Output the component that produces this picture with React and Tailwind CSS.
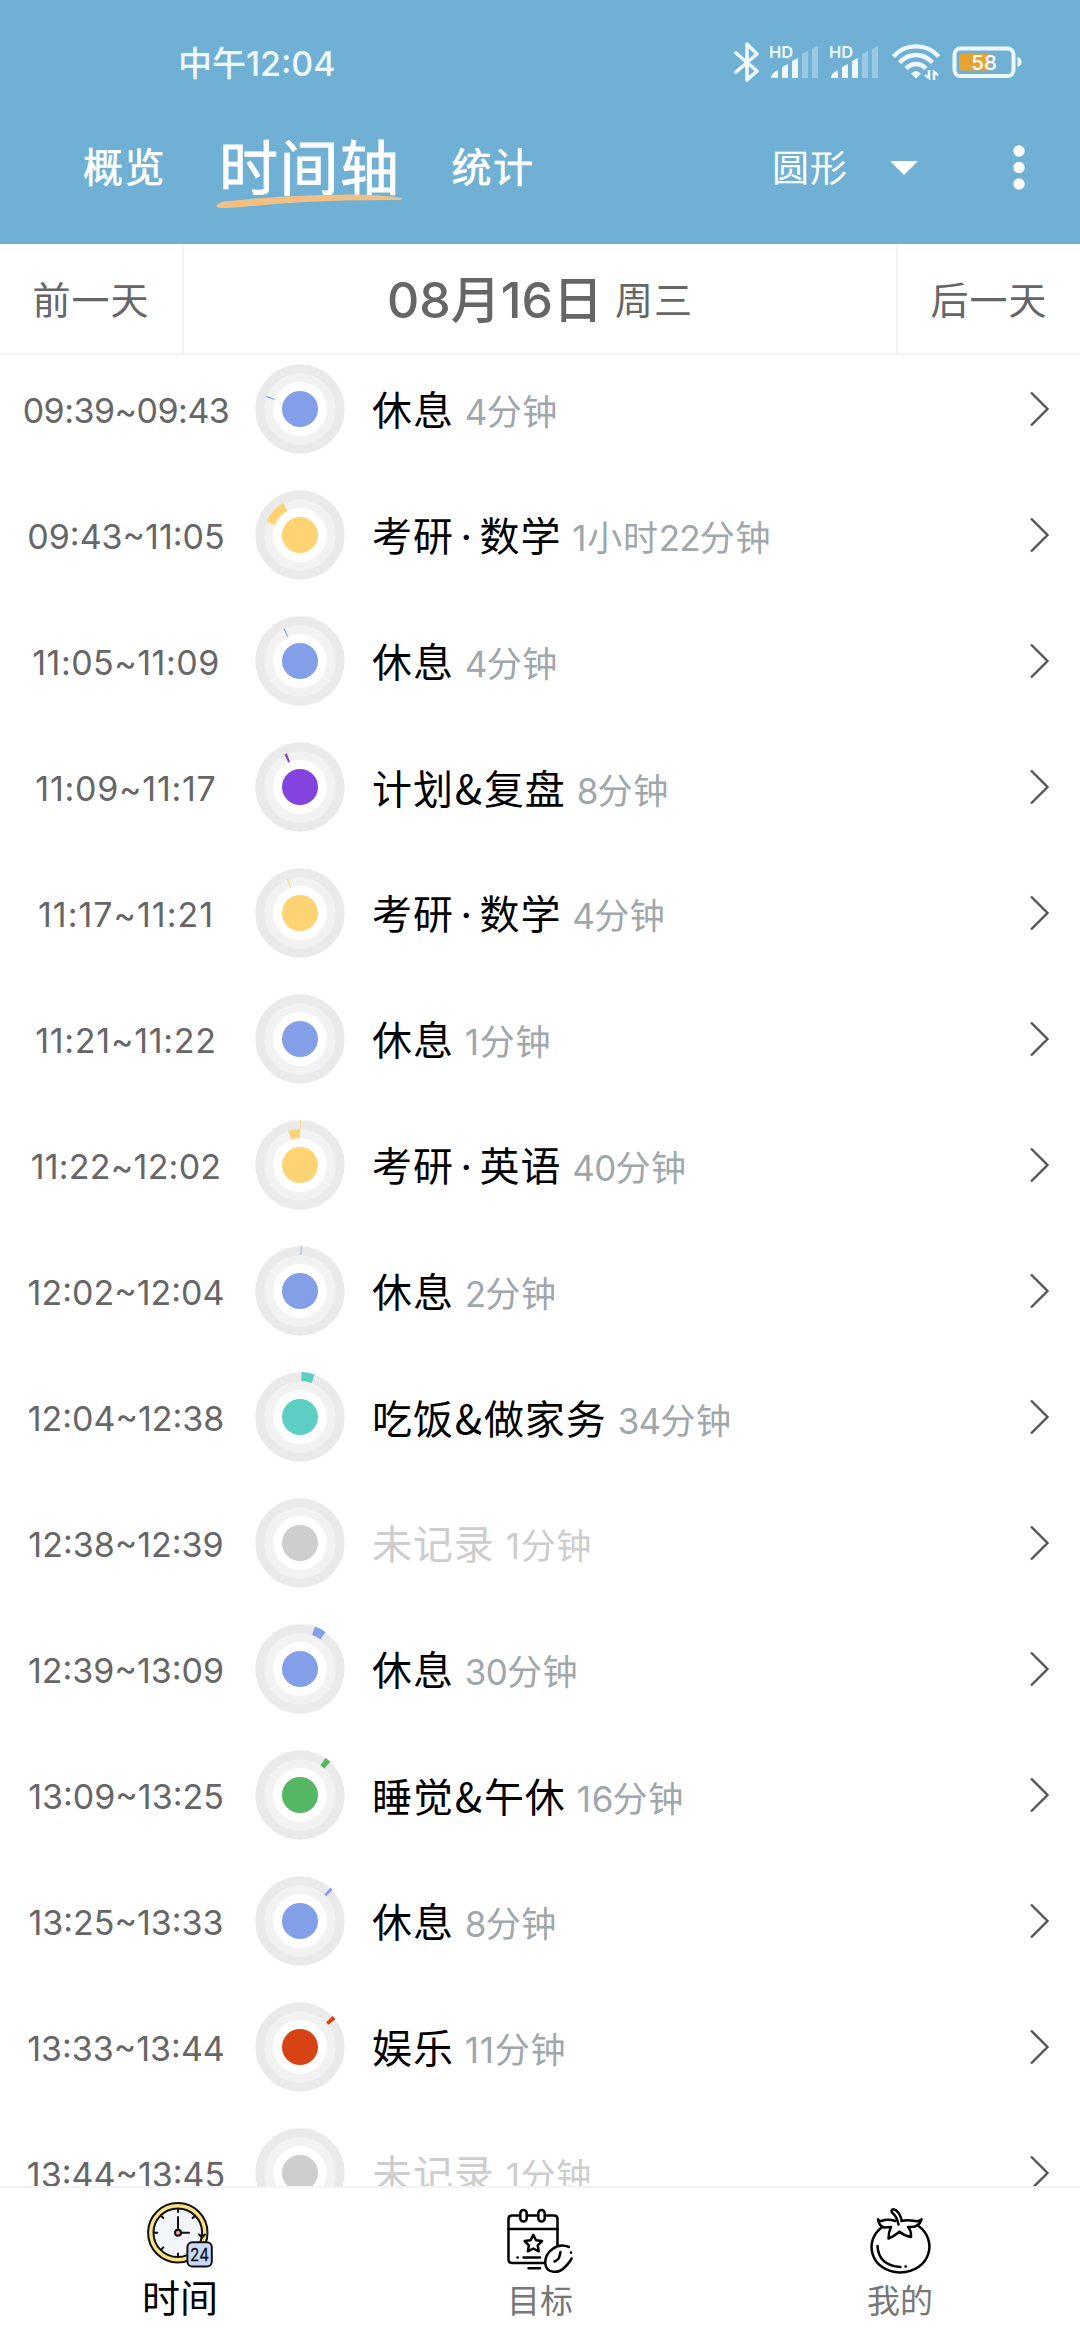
import React from "react";

const COLORS = {
  rest: "#829fe8",
  study: "#fed373",
  plan: "#8443de",
  meal: "#5ccfc2",
  sleep: "#55b763",
  fun: "#d84315",
  none: "#cecece",
};

const entries = [
  { start: "09:39", end: "09:43", name: "休息", duration: "4分钟", kind: "rest" },
  { start: "09:43", end: "11:05", name: "考研 · 数学", duration: "1小时22分钟", kind: "study" },
  { start: "11:05", end: "11:09", name: "休息", duration: "4分钟", kind: "rest" },
  { start: "11:09", end: "11:17", name: "计划&复盘", duration: "8分钟", kind: "plan" },
  { start: "11:17", end: "11:21", name: "考研 · 数学", duration: "4分钟", kind: "study" },
  { start: "11:21", end: "11:22", name: "休息", duration: "1分钟", kind: "rest" },
  { start: "11:22", end: "12:02", name: "考研 · 英语", duration: "40分钟", kind: "study" },
  { start: "12:02", end: "12:04", name: "休息", duration: "2分钟", kind: "rest" },
  { start: "12:04", end: "12:38", name: "吃饭&做家务", duration: "34分钟", kind: "meal" },
  { start: "12:38", end: "12:39", name: "未记录", duration: "1分钟", kind: "none" },
  { start: "12:39", end: "13:09", name: "休息", duration: "30分钟", kind: "rest" },
  { start: "13:09", end: "13:25", name: "睡觉&午休", duration: "16分钟", kind: "sleep" },
  { start: "13:25", end: "13:33", name: "休息", duration: "8分钟", kind: "rest" },
  { start: "13:33", end: "13:44", name: "娱乐", duration: "11分钟", kind: "fun" },
  { start: "13:44", end: "13:45", name: "未记录", duration: "1分钟", kind: "none" },
];

const toMinutes = (time) => {
  const [h, m] = time.split(":").map(Number);
  return h * 60 + m;
};

// Ring slice between two minutes of a 12 hour dial
const slice = (from, to, inner, outer) => {
  const point = (minutes, r) => {
    const angle = (minutes / 720) * Math.PI * 2;
    return `${(48 + r * Math.sin(angle)).toFixed(2)} ${(48 - r * Math.cos(angle)).toFixed(2)}`;
  };
  return `M${point(from, outer)} A${outer} ${outer} 0 0 1 ${point(to, outer)} L${point(to, inner)} A${inner} ${inner} 0 0 0 ${point(from, inner)} Z`;
};

// The narrow "1" leaves a range short, so it gets a little more tracking
const rangeTracking = (range) => {
  const ones = range.split("1").length - 1;
  return `${(ones * 0.25 - 0.5).toFixed(2)}px`;
};

// Inner ring is the morning, outer ring is the afternoon
function Dial({ start, end, kind }) {
  const from = toMinutes(start);
  const to = toMinutes(end);
  const color = COLORS[kind];
  const visible = kind !== "none" && to - from > 1;

  return (
    <svg className="h-24 w-24 shrink-0" viewBox="0 0 96 96">
      <circle cx="48" cy="48" r="44.7" fill="#eaeaea" />
      <circle cx="48" cy="48" r="35.8" fill="#f2f2f2" />
      <circle cx="48" cy="48" r="27" fill="#fff" />
      {visible && from < 720 && <path d={slice(from, Math.min(to, 720), 27, 36)} fill={color} />}
      {visible && to > 720 && <path d={slice(Math.max(from, 720), to, 36, 45)} fill={color} />}
      <circle cx="48" cy="48" r="18" fill={color} />
    </svg>
  );
}

function Name({ text }) {
  return (
    <span className="text-[40px] tracking-[0.9px] [word-spacing:-5.5px]">
      {text.split("&").map((part, i) => (
        <React.Fragment key={part}>
          {i > 0 && <span className="px-px font-['Noto_Sans_CJK_SC',sans-serif]">&amp;</span>}
          {part}
        </React.Fragment>
      ))}
    </span>
  );
}

function Duration({ text }) {
  return (
    <span className="text-[35px] tracking-[0.7px]">
      {text.split(/([02-9]+)/).map((part, i) => (
        <span key={i} className={i % 2 ? "tracking-[-0.8px]" : ""}>{part}</span>
      ))}
    </span>
  );
}

function Row({ entry }) {
  const empty = entry.kind === "none";
  const range = `${entry.start}~${entry.end}`;
  return (
    <div className="flex h-[126px] shrink-0 items-center">
      <div
        className="w-[252px] shrink-0 pt-[3px] text-center text-[34px] leading-none text-[#666]"
        style={{ letterSpacing: rangeTracking(range) }}
      >
        {range}
      </div>
      <Dial {...entry} />
      <div className={`ml-6 flex flex-1 items-baseline gap-[11px] whitespace-nowrap pt-[3px] leading-none ${empty ? "text-[#cdcdcd]" : "text-black"}`}>
        <Name text={entry.name} />
        <span className={empty ? "text-[#cdcdcd]" : "text-[#9ea7ab]"}>
          <Duration text={entry.duration} />
        </span>
      </div>
      <svg className="mr-7 h-10 w-6 shrink-0" viewBox="0 0 24 40" fill="none" stroke="#555" strokeWidth="2.4">
        <path d="M3 3.5 L19.5 20 L3 36.5" />
      </svg>
    </div>
  );
}

function Signal() {
  return (
    <svg className="h-10 w-[52px]" viewBox="0 0 52 40" fill="#eef9ff">
      <text x="0" y="16" fontSize="16.5" fontWeight="600">HD</text>
      <path d="M2 36 q0 -5 7 -8 v8 z" />
      <path d="M13 25 l6 -3 v14 h-6 z" />
      <path d="M23 19 l6 -3 v20 h-6 z" />
      <path d="M33 12 l6 -3 v27 h-6 z" opacity="0.35" />
      <path d="M43 7 l6 -3 v32 h-6 z" opacity="0.35" />
    </svg>
  );
}

function StatusBar() {
  return (
    <div className="flex h-[124px] items-center pl-[178px] pr-[58px] text-[#eef9ff]">
      <span className="flex-1 pt-[3px] text-[34px] font-medium leading-none">中午12:04</span>
      <svg className="h-11 w-7" viewBox="0 0 28 44" fill="none" stroke="currentColor" strokeWidth="3.6" strokeLinecap="round" strokeLinejoin="round">
        <path d="M2 13 L23 31 L13 40 V4 L23 14 L2 32" />
      </svg>
      <div className="ml-[7px] flex gap-2">
        <Signal />
        <Signal />
      </div>
      <svg className="ml-[11px] h-10 w-12" viewBox="0 0 48 40" fill="none" stroke="currentColor" strokeWidth="4.4">
        <path d="M1.5 14.5 C13 1 35 1 46.5 14.5" />
        <path d="M7.5 20.5 C17 10.5 31 10.5 40.5 20.5" />
        <path d="M14 26.5 C20 20.5 28 20.5 34 26.5" />
        <path d="M24 36.5 L19 31.5 Q24 26.5 29 31.5 Z" fill="currentColor" stroke="none" />
        <path d="M37 28 V36 L33 33 M42 38 V30 L46 33" strokeWidth="2.5" />
      </svg>
      <svg className="ml-3 h-8 w-[70px]" viewBox="0 0 70 32">
        <rect x="2.5" y="2.5" width="59" height="27.5" rx="6" fill="none" stroke="#eef9ff" strokeWidth="4" />
        <rect x="7" y="8" width="31" height="16.5" rx="2" fill="#e8a32e" />
        <path d="M65.5 11 q4 1 4 5 t-4 5 z" fill="#eef9ff" />
        <text x="32" y="23.5" fontSize="20.5" fontWeight="500" fill="#fff" textAnchor="middle">58</text>
      </svg>
    </div>
  );
}

function Header() {
  return (
    <header className="h-[244px] shrink-0 bg-[#6fb0d4] text-white">
      <StatusBar />
      <div className="flex h-[88px] items-center pl-[83px] leading-none">
        <span className="text-[40px] tracking-[1.5px] [-webkit-text-stroke:0.6px_white]">概览</span>
        <div className="relative ml-[53px]">
          <span className="text-[59px] tracking-[1.5px] [-webkit-text-stroke:0.8px_white]">时间轴</span>
          <svg className="absolute -left-1 top-[55px] h-4 w-[188px]" viewBox="0 0 188 16">
            <path d="M1 12 Q5 7 14 7 Q60 2 110 1 Q160 -1 187 4 Q188 6 182 6 Q110 6 60 10 Q28 13 10 14 Q2 14 1 12 Z" fill="#f2c084" />
          </svg>
        </div>
        <span className="ml-[51px] flex-1 text-[40px] tracking-[1.5px] [-webkit-text-stroke:0.6px_white]">统计</span>
        <span className="text-[37px] tracking-[1px]">圆形</span>
        <svg className="ml-[42px] h-4 w-7" viewBox="0 0 28 16" fill="#fff">
          <path d="M0 1 H28 L14 15 Z" />
        </svg>
        <svg className="ml-[94px] mr-[54px] h-12 w-3.5" viewBox="0 0 14 48" fill="#fff">
          <circle cx="7" cy="7" r="5.7" />
          <circle cx="7" cy="23.5" r="5.7" />
          <circle cx="7" cy="40" r="5.7" />
        </svg>
      </div>
    </header>
  );
}

function DateBar() {
  return (
    <div className="flex h-[111px] shrink-0 items-stretch border-b-2 border-[#f3f3f3] text-[38px] leading-none tracking-[1px] text-[#666]">
      <div className="flex w-[184px] items-center justify-center border-r-2 border-[#f3f3f3] pt-0.5">前一天</div>
      <div className="flex flex-1 items-center justify-center gap-3 pt-0.5">
        <span className="text-[50px] font-medium tracking-normal">08月16日</span>
        <span>周三</span>
      </div>
      <div className="flex w-[184px] items-center justify-center border-l-2 border-[#f3f3f3] pt-0.5">后一天</div>
    </div>
  );
}

function ClockIcon() {
  const ticks = [0, 45, 135, 180, 225, 270, 315];
  return (
    <svg className="h-[76px] w-[72px]" viewBox="0 0 72 76" fill="none" stroke="#111" strokeWidth="2" strokeLinecap="round">
      <circle cx="33.8" cy="32.7" r="29.7" fill="#f9e284" />
      <circle cx="33.8" cy="32.7" r="24.3" fill="#f2f6f9" />
      {ticks.map((angle) => (
        <path key={angle} d="M34 9 v3" transform={`rotate(${angle} 34 32.7)`} />
      ))}
      <path d="M34 32.7 V17 M34 32.7 H45" />
      <circle cx="34" cy="32.7" r="3" fill="#f59ba5" />
      <path d="M55 34.5 l3 3 l3 -3" fill="#111" />
      <rect x="43.4" y="42.2" width="24.4" height="24.4" rx="5" fill="#c9daf8" />
      <text x="55.6" y="60.6" fontSize="17" fill="#111" stroke="#111" strokeWidth="0.3" textAnchor="middle" textLength="19" lengthAdjust="spacingAndGlyphs">24</text>
    </svg>
  );
}

function GoalIcon() {
  return (
    <svg className="h-[76px] w-[72px]" viewBox="0 0 72 76" fill="none" stroke="#000" strokeWidth="2.5" strokeLinecap="round" strokeLinejoin="round">
      <path d="M40.5 63 H8 Q4.5 63 4.5 59.5 V19 Q4.5 15.5 8 15.5 H16 M23 15.5 H34 M41 15.5 H50 Q53.5 15.5 53.5 19 V46" />
      <path d="M4.5 29 H53.5" />
      <rect x="16.3" y="10" width="6.4" height="11.5" rx="3.2" />
      <rect x="34.3" y="10" width="6.4" height="11.5" rx="3.2" />
      <path d="M29.3 34.8 L32 40.2 L38 41.1 L33.7 45.3 L34.7 51.3 L29.3 48.5 L23.9 51.3 L24.9 45.3 L20.6 41.1 L26.6 40.2 Z" />
      <path d="M13.5 57.5 h.3 M19.5 57.5 H36 M24.5 68.3 H36" />
      <path d="M65 47 C53 42 41 52 41.2 63 C42 73.5 54 74 60.5 67.5 Q66.5 61.5 67.5 58.5 M67 52.5 v.2" />
      <path d="M56.5 52 L55 58 Q53 60.5 50.5 61.5" />
    </svg>
  );
}

function TomatoIcon() {
  return (
    <svg className="h-[76px] w-[72px]" viewBox="0 0 72 76" fill="none" stroke="#000" strokeWidth="2.5" strokeLinecap="round" strokeLinejoin="round">
      <path d="M18.5 27 C-1 40 6 71.5 36 72.6 C67 71.500 74 40 54.5 26" />
      <path d="M31.5 21 Q23 18.5 17.5 21 Q15 21.5 14 19.3 Q15 26 20 27.5 L27 27 Q24.5 32 24.5 38.5 Q30 36.5 35.5 31.8 Q40.5 36 47 37 Q47.5 31 44 27 Q55 28 57.5 19.3 Q55 22 49.5 20.8 Q43 19.5 37.5 21" />
      <path d="M34.5 24.5 Q33 16.5 28 12.5 Q26.5 9.5 29.5 9.3 Q35 10.5 38 20.8" />
      <path d="M13.5 46 Q14.5 65.5 36.5 67 M41.5 66.5 h.3" />
    </svg>
  );
}

const tabs = [
  { label: "时间", icon: ClockIcon, active: true },
  { label: "目标", icon: GoalIcon },
  { label: "我的", icon: TomatoIcon },
];

function TabBar() {
  return (
    <nav className="grid h-[154px] shrink-0 grid-cols-3 border-t-2 border-[#f3f3f3] bg-white">
      {tabs.map(({ label, icon: Icon, active }) => (
        <div key={label} className="flex flex-col items-center pt-3">
          <Icon />
          <span className={active ? "mt-[3px] text-[38px] leading-none text-black" : "mt-[9px] text-[33px] leading-none text-[#777]"}>
            {label}
          </span>
        </div>
      ))}
    </nav>
  );
}

export default function App() {
  return (
    <div className="flex h-[2340px] w-[1080px] flex-col overflow-hidden bg-white font-['Inter','Noto_Sans_CJK_SC',sans-serif]">
      <Header />
      <DateBar />
      <main className="min-h-0 flex-1 overflow-hidden">
        {/* list is scrolled slightly past the top of the first row */}
        <div className="-mt-[9px] flex flex-col">
          {entries.map((entry) => (
            <Row key={entry.start} entry={entry} />
          ))}
        </div>
      </main>
      <TabBar />
    </div>
  );
}
